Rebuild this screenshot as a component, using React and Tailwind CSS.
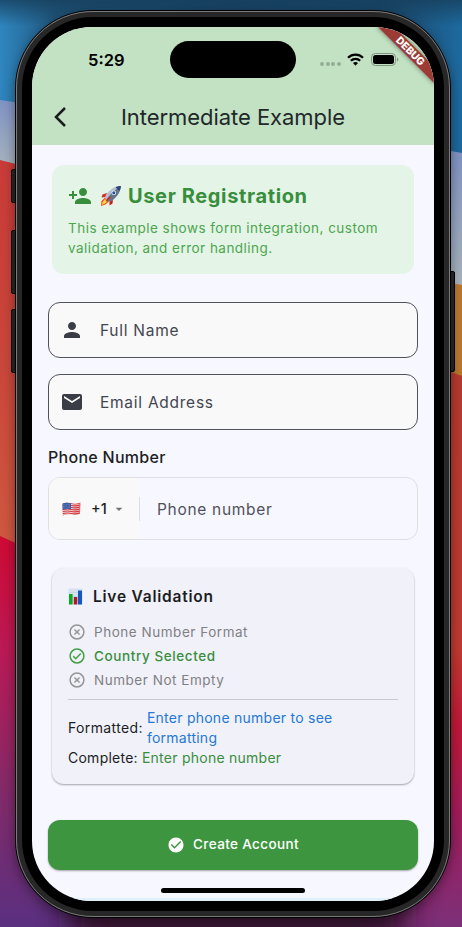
import React from "react";
import { MdPersonAddAlt1, MdPerson, MdEmail, MdCheckCircle, MdArrowDropDown } from "react-icons/md";

function Wallpaper() {
  return (
    <svg className="absolute inset-0" width="462" height="927" viewBox="0 0 462 927">
      <defs>
        <linearGradient id="top" x1="0" y1="0" x2="1" y2="0">
          <stop offset="0" stopColor="#2f86c0" />
          <stop offset="0.12" stopColor="#20587f" />
          <stop offset="0.5" stopColor="#17456a" />
          <stop offset="0.85" stopColor="#1b4b70" />
          <stop offset="1" stopColor="#1d6a9f" />
        </linearGradient>
        <linearGradient id="shade" x1="0" y1="0" x2="0" y2="1">
          <stop offset="0" stopColor="#173f5c" stopOpacity="0.8" />
          <stop offset="1" stopColor="#173f5c" stopOpacity="0" />
        </linearGradient>
        <linearGradient id="left" x1="0" y1="0" x2="0" y2="1">
          <stop offset="0" stopColor="#c93b38" />
          <stop offset="0.5" stopColor="#c9463a" />
          <stop offset="1" stopColor="#cf5a40" />
        </linearGradient>
        <linearGradient id="low" x1="0" y1="0" x2="0" y2="1">
          <stop offset="0" stopColor="#cf0a34" />
          <stop offset="0.3" stopColor="#b91a56" />
          <stop offset="0.65" stopColor="#832a68" />
          <stop offset="1" stopColor="#5a3080" />
        </linearGradient>
        <linearGradient id="pale" x1="0" y1="0" x2="0" y2="1">
          <stop offset="0" stopColor="#7f93c4" />
          <stop offset="1" stopColor="#a9b4bc" />
        </linearGradient>
        <linearGradient id="rightlow" x1="0" y1="0" x2="0" y2="1">
          <stop offset="0" stopColor="#b53a30" />
          <stop offset="0.5" stopColor="#c03a30" />
          <stop offset="0.64" stopColor="#c01838" />
          <stop offset="0.8" stopColor="#a01c5c" />
          <stop offset="1" stopColor="#7c3078" />
        </linearGradient>
        <filter id="dim" x="-30%" y="-150%" width="160%" height="400%">
          <feGaussianBlur stdDeviation="16" />
        </filter>
      </defs>
      <rect width="462" height="160" fill="url(#top)" />
      <rect width="462" height="26" fill="url(#shade)" />
      <path d="M0 100L20 103V170H0Z" fill="url(#pale)" />
      <path d="M0 160L20 165V560H0Z" fill="url(#left)" />
      <path d="M0 536L20 545L231 545V927H0Z" fill="url(#low)" />
      <path d="M440 149L462 153V290H440Z" fill="url(#pale)" />
      <path d="M440 281L462 285V380H440Z" fill="#b9772b" />
      <path d="M231 368H440L462 376V927H231Z" fill="url(#rightlow)" />
      <rect x="70" y="880" width="335" height="80" fill="#3a1735" filter="url(#dim)" />
      <rect x="110" y="905" width="250" height="22" fill="#3a1735" />
    </svg>
  );
}

function Rocket() {
  return (
    <svg width="22" height="22" viewBox="0 0 22 22">
      <path d="M7 8L2.500 9.500L1.500 12.500L6 12Z" fill="#d92a1c" />
      <path d="M13 14.500L12.500 18.500L9.500 20.500L9.500 16Z" fill="#c91f18" />
      <path d="M5 12.500L1.500 16L1 21L5.500 19.500L9 16.500Z" fill="#f04a1d" />
      <path d="M5 14L2.500 17L2 20L5 18.500L7.500 16.500Z" fill="#ffd84a" />
      <path d="M20.800 1C15.500 1 10 4 5.500 10.500L5 13L8.500 16.500L11.500 16C17.500 11.500 20.500 6.500 20.800 1Z" fill="#b4c0d0" />
      <path d="M20.800 1C16 4 10 9 6.500 14.500L8.500 16.500L11.500 16C17.500 11.500 20.500 6.500 20.800 1Z" fill="#66758b" />
      <path d="M20.800 1C19 1 17 1.400 15.500 2.200L19.500 6C20.400 4.400 20.800 2.600 20.800 1Z" fill="#2e4675" />
      <circle cx="13.800" cy="7.800" r="2.300" fill="#e9eef5" />
      <circle cx="13.800" cy="7.800" r="1.500" fill="#22569f" />
      <path d="M10 11L5.500 16L7 16.500L11 12Z" fill="#c92a22" />
    </svg>
  );
}

function Flag() {
  return (
    <svg width="19" height="14" viewBox="0 0 19 14">
      <defs>
        <clipPath id="wave">
          <path d="M.5 1.800C4 .2 6.500.5 9.500 1.300S15.500 1.600 18.500.4L18 12C15 13.400 12 13 9.500 12.400S4 12.200.8 13.600Z" />
        </clipPath>
      </defs>
      <g clipPath="url(#wave)">
        <rect width="19" height="14" fill="#f0d4d4" />
        <g stroke="#d23a40" strokeWidth="1.200" fill="none">
          <path d="M0 2C4 .5 6.500.8 9.500 1.500S15.500 1.900 19 .6" />
          <path d="M0 4C4 2.500 6.500 2.800 9.500 3.500S15.500 3.900 19 2.600" />
          <path d="M0 6C4 4.500 6.500 4.800 9.500 5.500S15.500 5.900 19 4.600" />
          <path d="M0 8C4 6.500 6.500 6.800 9.500 7.500S15.500 7.900 19 6.600" />
          <path d="M0 10C4 8.500 6.500 8.800 9.500 9.500S15.500 9.900 19 8.600" />
          <path d="M0 12C4 10.500 6.500 10.800 9.500 11.500S15.500 11.900 19 10.600" />
          <path d="M0 14C4 12.500 6.500 12.800 9.500 13.500" />
        </g>
        <path d="M0 0H9V7.500C6 6.800 3 7 0 8.200Z" fill="#3a5ba6" />
        <g stroke="#a9bbdf" strokeWidth=".6" strokeDasharray=".6 1">
          <path d="M1 2.800L9 2.200M1 4.500L9 3.900M1 6.200L9 5.600" />
        </g>
      </g>
    </svg>
  );
}

function Chart() {
  return (
    <svg width="15" height="17" viewBox="0 0 15 17">
      <rect x=".5" y=".5" width="14" height="16" fill="#d6e3ee" />
      <path d="M.5 4.500H14.500M.5 8.500H14.500M.5 12.500H14.500" stroke="#bdd0de" strokeWidth=".6" />
      <rect x="1" y="6" width="3.600" height="10.500" fill="#0fa820" />
      <rect x="5.800" y="9" width="3.500" height="7.500" fill="#b3152a" />
      <rect x="10" y="2.500" width="4" height="14" fill="#1557c0" />
    </svg>
  );
}

function Status({ ok, children }) {
  return (
    <div className={ok ? "flex h-6 items-center gap-2 text-[#388e3c]" : "flex h-6 items-center gap-2 text-[#808083]"}>
      <svg width="18" height="18" viewBox="0 0 24 24" fill="none" stroke={ok ? "#43a047" : "#969699"} strokeWidth="2">
        <circle cx="12" cy="12" r="9.200" />
        {ok ? <path d="M7 12.200L10.400 15.600L17 8.800" /> : <path d="M8.600 8.600L15.400 15.400M15.400 8.600L8.600 15.400" />}
      </svg>
      <span className={ok ? "text-[13.500px] font-medium tracking-[0.6px]" : "text-[13.500px] tracking-[0.53px]"}>{children}</span>
    </div>
  );
}

function Field({ icon, children }) {
  return (
    <div className="flex h-14 items-center gap-4 rounded-xl border border-[#50525b] bg-[#f9f9f9] pl-[11px] text-[#44464f]">
      {icon}
      <span className="pt-0.5 text-[15.500px] tracking-[0.74px]">{children}</span>
    </div>
  );
}

export default function App() {
  return (
    <div className="relative h-[927px] w-[462px] overflow-hidden font-['Inter',sans-serif]">
      <Wallpaper />
      <div className="absolute top-[169px] left-[11px] h-[34px] w-2 rounded-l-xs border border-black bg-[#272727]" />
      <div className="absolute top-[230px] left-[11px] h-[64px] w-2 rounded-l-xs border border-black bg-[#272727]" />
      <div className="absolute top-[309px] left-[11px] h-[64px] w-2 rounded-l-xs border border-black bg-[#272727]" />
      <div className="absolute top-[271px] left-[448px] h-[101px] w-[7px] rounded-r-xs border border-black bg-[#272727]" />

      <div className="absolute top-[10px] left-[15px] h-[908px] w-[436px] rounded-[78px] border border-black bg-[#272727] shadow-[0_4px_12px_rgba(0,0,0,0.4)]">
        <div className="h-full rounded-[77px] border border-[#7a7a7a] p-[5px]">
          <div className="h-full rounded-[71px] bg-black px-[10px] pt-[10px] pb-[9px]">
            <main className="relative flex h-[874px] w-[402px] flex-col overflow-hidden rounded-[60px] bg-[#f7f7ff]">
              <header className="h-[118px] shrink-0 bg-[#c2e2c3]">
                <div className="flex h-[66px] items-center pb-[2px] pl-[56px]">
                  <span className="w-[82px] pt-[3px] text-[16.500px] font-semibold text-black">5:29</span>
                  <div className="h-[37px] w-[126px] rounded-full bg-black" />
                  <div className="mt-[9px] ml-[24px] flex gap-[1.500px]">
                    <i className="size-1 rounded-full bg-[#94ad95]" />
                    <i className="size-1 rounded-full bg-[#94ad95]" />
                    <i className="size-1 rounded-full bg-[#94ad95]" />
                    <i className="size-1 rounded-full bg-[#94ad95]" />
                  </div>
                  <svg className="ml-[6.500px]" width="17" height="13" viewBox="0 0 17 13" fill="none" stroke="#000" strokeWidth="2.200">
                    <path d="M1 4.800C5.200.6 11.800.6 16 4.800" />
                    <path d="M3.800 7.800C6.400 5.200 10.600 5.200 13.200 7.800" />
                    <path d="M8.500 12.700L6 10.100C7.400 8.700 9.600 8.700 11 10.100Z" fill="#000" stroke="none" />
                  </svg>
                  <svg className="ml-[6.500px]" width="28" height="13" viewBox="0 0 28 13">
                    <rect x=".5" y=".5" width="24" height="12" rx="3.800" fill="none" stroke="#7e947f" />
                    <rect x="2" y="2" width="21" height="9" rx="2.500" />
                    <path d="M26 4.500V8.500C27.800 7.800 27.800 5.200 26 4.500Z" fill="#7e947f" />
                  </svg>
                </div>
                <div className="flex h-[48px] items-center">
                  <svg className="ml-[21px]" width="14" height="20" viewBox="0 0 14 20" fill="none" stroke="#1a1c20" strokeWidth="2.500">
                    <path d="M12 1L3 10L12 19" />
                  </svg>
                  <h1 className="ml-[54px] text-[22px] tracking-[-0.05px] whitespace-nowrap text-[#22272a]">Intermediate Example</h1>
                </div>
              </header>
              <svg className="absolute top-0 right-0" width="60" height="60" viewBox="0 0 60 60">
                <defs>
                  <filter id="soft" x="-30%" y="-30%" width="160%" height="160%">
                    <feDropShadow dx="0" dy="0" stdDeviation="2.500" floodOpacity=".5" />
                  </filter>
                </defs>
                <path d="M2 -2H18.500L62 41.500V58Z" fill="#9c3a36" filter="url(#soft)" />
                <text x="36.500" y="27.700" transform="rotate(45 36.500 24)" textAnchor="middle" fontSize="10.300" fontWeight="800" fill="#fff">DEBUG</text>
              </svg>

              <section className="mx-5 mt-5 h-[109px] shrink-0 rounded-xl bg-[#e4f4e6] px-4 pt-[18px]">
                <div className="flex h-[26px] items-center">
                  <MdPersonAddAlt1 className="size-6 -scale-x-100 text-[#388e3c]" />
                  <span className="ml-2"><Rocket /></span>
                  <h2 className="ml-[6px] text-[20px] font-bold tracking-[0.63px] whitespace-nowrap text-[#388e3c]">User Registration</h2>
                </div>
                <p className="mt-[9px] text-[13.500px] leading-5 tracking-[0.47px] whitespace-nowrap text-[#4ca650]">This example shows form integration, custom<br />validation, and error handling.</p>
              </section>

              <div className="mx-4 mt-7 flex flex-col gap-4">
                <Field icon={<MdPerson className="size-6 text-[#3a3d45]" />}>Full Name</Field>
                <Field icon={<MdEmail className="size-6 text-[#3a3d45]" />}>Email Address</Field>
              </div>

              <h3 className="mt-[15px] ml-4 text-[16px] leading-6 font-medium tracking-[0.28px] text-[#1d1f24]">Phone Number</h3>
              <div className="mx-4 mt-2 flex h-[63px] shrink-0 items-center overflow-hidden rounded-xl border border-[#dfdfe2]">
                <div className="flex h-full w-[90px] items-center bg-[#f9f9f9] pl-[13px]">
                  <Flag />
                  <span className="ml-[10px] text-[14.500px] font-medium text-[#1d1f24]">+1</span>
                  <MdArrowDropDown className="ml-1 size-4 text-[#707070]" />
                </div>
                <div className="h-6 w-px bg-[#dedee2]" />
                <span className="ml-[17px] pt-0.5 text-[15.500px] tracking-[0.7px] text-[#50525b]">Phone number</span>
              </div>

              <section className="mx-5 mt-7 h-[216px] shrink-0 rounded-xl bg-[#f1f1fa] px-4 pt-4 text-[#1c1d22] shadow-[0_1px_2px_rgba(0,0,0,0.35)]">
                <div className="flex h-6 items-center gap-[10px]">
                  <Chart />
                  <h3 className="pt-0.5 text-[15.500px] font-semibold tracking-[0.77px]">Live Validation</h3>
                </div>
                <div className="mt-3">
                  <Status>Phone Number Format</Status>
                  <Status ok>Country Selected</Status>
                  <Status>Number Not Empty</Status>
                </div>
                <div className="mt-[7px] h-px bg-[#c9c9d2]" />
                <div className="mt-2 flex items-center gap-1 text-[14px] leading-5 tracking-[0.25px] whitespace-nowrap">
                  <span className="tracking-[0.37px]">Formatted:</span>
                  <span className="text-[#2579d4]">Enter phone number to see<br />formatting</span>
                </div>
                <div className="flex gap-1 text-[14px] leading-5 tracking-[0.25px] whitespace-nowrap">
                  <span>Complete:</span>
                  <span className="text-[#388e3c]">Enter phone number</span>
                </div>
              </section>

              <button className="mx-4 mt-9 flex h-[50px] shrink-0 items-center justify-center gap-2 rounded-xl bg-[#3d963f] pb-px text-[13.500px] font-medium tracking-[0.37px] text-white shadow-[0_1px_2px_rgba(0,0,0,0.35)]">
                <MdCheckCircle className="size-[18px]" />
                Create Account
              </button>
              <div className="mx-auto mt-[18px] h-[5px] w-[144px] shrink-0 rounded-full bg-black" />
              <div className="mt-auto h-[3px] bg-[#dff0fb]" />
            </main>
          </div>
        </div>
      </div>
    </div>
  );
}
